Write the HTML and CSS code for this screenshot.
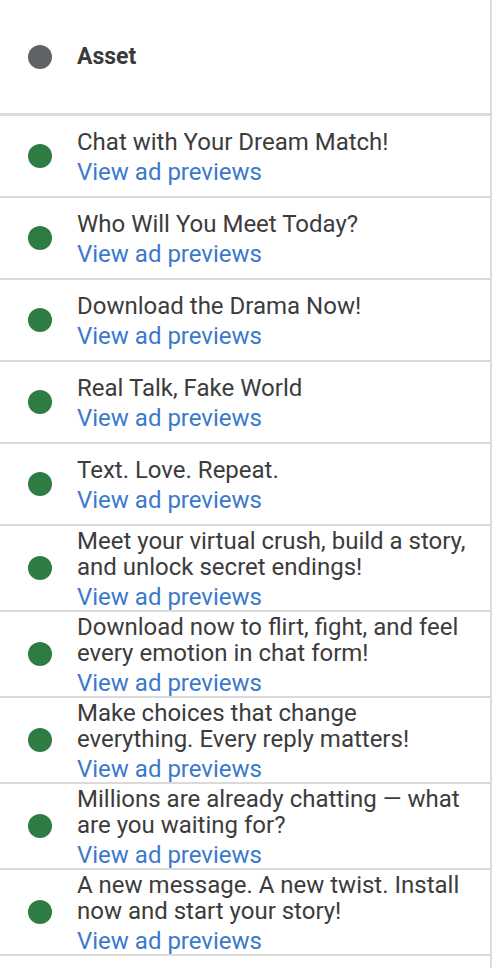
FILE: index.html
```html
<!DOCTYPE html>
<html lang="en">
<head>
<meta charset="utf-8">
<title>Assets</title>
<link rel="stylesheet" href="styles.css">
</head>
<body>
<div class="table">
  <div class="head">
    <span class="dot dot-gray"></span>
    <span class="head-label">Asset</span>
  </div>
  <div class="row"><span class="dot"></span><div class="cell"><div class="title">Chat with Your Dream Match!</div><a class="link">View ad previews</a></div></div>
  <div class="row"><span class="dot"></span><div class="cell"><div class="title">Who Will You Meet Today?</div><a class="link">View ad previews</a></div></div>
  <div class="row"><span class="dot"></span><div class="cell"><div class="title">Download the Drama Now!</div><a class="link">View ad previews</a></div></div>
  <div class="row"><span class="dot"></span><div class="cell"><div class="title">Real Talk, Fake World</div><a class="link">View ad previews</a></div></div>
  <div class="row"><span class="dot"></span><div class="cell"><div class="title">Text. Love. Repeat.</div><a class="link">View ad previews</a></div></div>
  <div class="row"><span class="dot"></span><div class="cell"><div class="title">Meet your virtual crush, build a story, and unlock secret endings!</div><a class="link">View ad previews</a></div></div>
  <div class="row"><span class="dot"></span><div class="cell"><div class="title">Download now to flirt, fight, and feel every emotion in chat form!</div><a class="link">View ad previews</a></div></div>
  <div class="row"><span class="dot"></span><div class="cell"><div class="title">Make choices that change everything. Every reply matters!</div><a class="link">View ad previews</a></div></div>
  <div class="row"><span class="dot"></span><div class="cell"><div class="title">Millions are already chatting — what are you waiting for?</div><a class="link">View ad previews</a></div></div>
  <div class="row"><span class="dot"></span><div class="cell"><div class="title">A new message. A new twist. Install now and start your story!</div><a class="link">View ad previews</a></div></div>
</div>
</body>
</html>
```

FILE: styles.css
```css
html, body {
  margin: 0;
  padding: 0;
  background: #ffffff;
}
body {
  font-family: Roboto, "Liberation Sans", Arial, sans-serif;
  color: #3c3c3c;
  height: 968px;
  overflow: hidden;
}
.table {
  width: 490px;
  border-right: 2px solid #dcdcdc;
  min-height: 968px;
}
.head {
  display: flex;
  align-items: center;
  height: 113px;
  border-bottom: 3px solid #dadada;
  padding-left: 28px;
  gap: 25px;
}
.head-label {
  font-size: 23px;
  font-weight: 700;
  color: #3a3a3a;
}
.dot {
  flex: none;
  width: 24px;
  height: 24px;
  border-radius: 50%;
  background: #2f7b44;
}
.dot-gray {
  background: #5f6368;
}
.row {
  display: flex;
  align-items: center;
  min-height: 80px;
  border-bottom: 2px solid #dadada;
  padding-left: 28px;
  gap: 25px;
}
.cell {
  display: flex;
  flex-direction: column;
  padding: 2px 20px 0 0;
  font-size: 24px;
}
.title {
  line-height: 26px;
}
.link {
  display: block;
  margin-top: 4px;
  line-height: 26px;
  color: #3a79cc;
  text-decoration: none;
}
```
